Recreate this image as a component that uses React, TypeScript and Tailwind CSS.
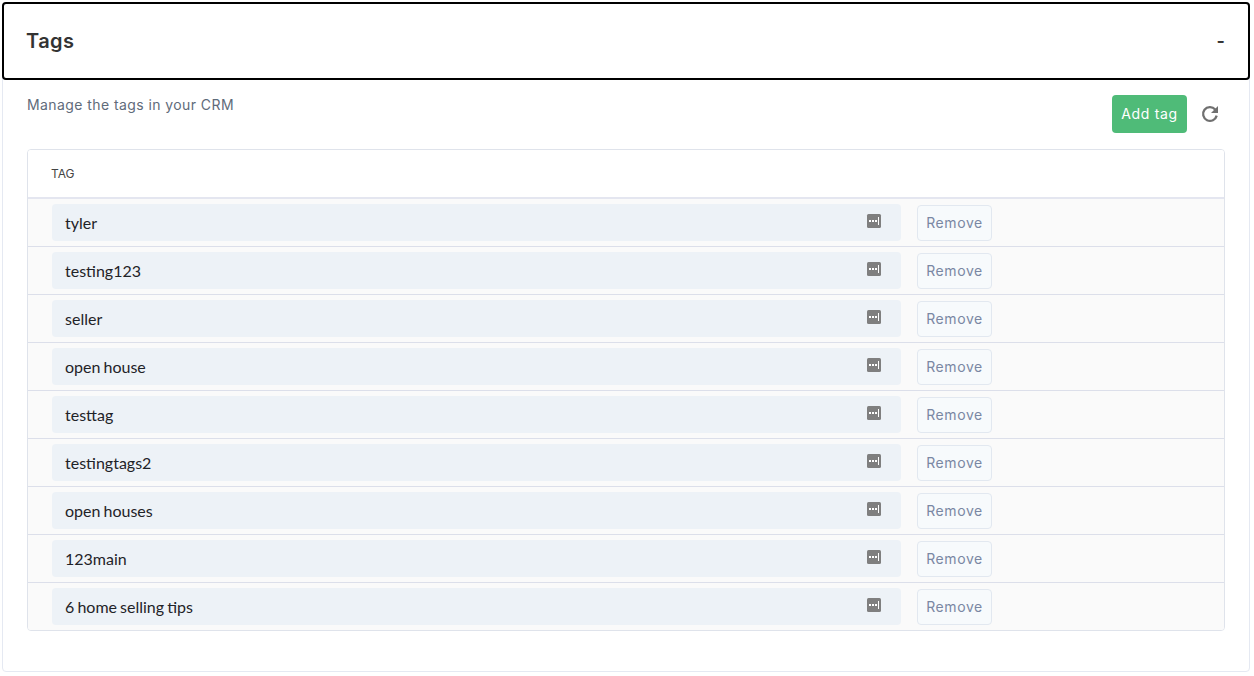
import React from 'react';

const tags = ['tyler', 'testing123', 'seller', 'open house', 'testtag', 'testingtags2', 'open houses', '123main', '6 home selling tips'];

const TagIcon = () => (
  <svg width="16" height="16" viewBox="0 0 16 16" className="mb-1">
    <rect x="1" y="1" width="14" height="14" rx="1.5" fill="#7f7f7f" />
    <rect x="3" y="7" width="2" height="2" fill="#fff" />
    <rect x="6" y="7" width="2" height="2" fill="#fff" />
    <rect x="9" y="7" width="2" height="2" fill="#fff" />
    <rect x="12" y="4" width="1" height="8" fill="#fff" />
  </svg>
);

const RefreshIcon = () => (
  <svg width="18" height="18" viewBox="0 0 18 18" fill="none">
    <path d="M14.2 4.4A6.9 6.9 0 1 0 15.7 10.6" stroke="#707070" strokeWidth="2.3" />
    <path d="M17 1v7h-7z" fill="#707070" />
  </svg>
);

const App: React.FC = () => {
  return (
    <div className="h-[676px] bg-white pt-[2px] pl-[2px] pr-[4px] pb-1 font-['Inter',sans-serif]">
      <div className="h-full border border-[#e5e9f2] rounded">
        <div className="flex items-center justify-between h-[78px] -mt-px -mx-px border-2 border-black rounded bg-white pl-[22px] pr-[23px]">
          <h2 className="text-[20px] font-semibold tracking-[0.4px] text-[#333]">Tags</h2>
          <span className="text-lg font-semibold text-[#333]">-</span>
        </div>

        <div className="px-[24px]">
          <div className="flex justify-between items-start h-[69px] pt-[15px]">
            <p className="text-[14px] leading-5 tracking-[0.42px] text-[#5f6b7a]">Manage the tags in your CRM</p>
            <div className="flex items-center gap-[14px] pr-[6px]">
              <button className="h-[38px] w-[75px] pb-[2px] rounded bg-[#4fbb78] text-white text-[14px] tracking-[0.7px]">Add tag</button>
              <RefreshIcon />
            </div>
          </div>

          <div className="border border-[#dfe3eb] rounded overflow-hidden">
            <div className="flex items-center h-[49px] pl-[23px] border-b-2 border-[#e4e6f0] bg-white text-[12px] text-[#444]">
              TAG
            </div>
            {tags.map((tag, i) => (
              <div key={tag} className={`flex gap-4 py-[5px] pl-[24px] bg-[#fafafa] ${i < tags.length - 1 ? 'h-[48px] border-b border-[#dcdfea]' : 'h-[47px]'}`}>
                <div className="flex items-center justify-between w-[849px] h-[37px] rounded bg-[#edf2f7] pl-[13px] pr-[19px] font-['Lato',sans-serif] text-[16px] [word-spacing:-1px] text-[#1f2328]">
                  <span>{tag}</span>
                  <TagIcon />
                </div>
                <button className="w-[75px] h-[36px] mt-auto pb-[2px] rounded border border-[#e2e8f0] bg-[#f7fafc] text-[14px] tracking-[0.6px] text-[#7a87a3]">Remove</button>
              </div>
            ))}
          </div>
        </div>
      </div>
    </div>
  );
};

export default App;
